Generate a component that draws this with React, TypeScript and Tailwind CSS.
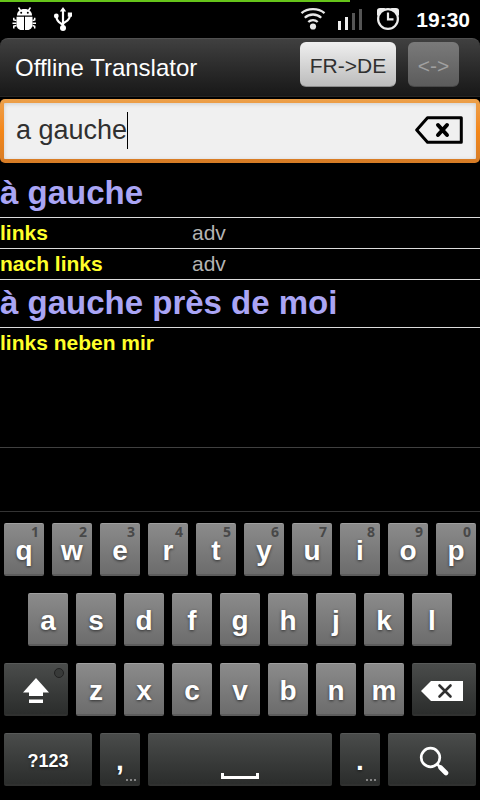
import { Fragment, useState, type ReactNode } from "react";
import clsx from "clsx";

type Entry = { head: string; rows: { text: string; kind?: string }[] };

const entries: Entry[] = [
  {
    head: "à gauche",
    rows: [
      { text: "links", kind: "adv" },
      { text: "nach links", kind: "adv" },
    ],
  },
  { head: "à gauche près de moi", rows: [{ text: "links neben mir" }] },
];

const TOP = "qwertyuiop".split("");
const MIDDLE = "asdfghjkl".split("");
const BOTTOM = "zxcvbnm".split("");

function StatusBar() {
  return (
    <div className="bg-black">
      <div className="h-[2px] w-[73%] bg-[#66c41a]" />
      <div className="flex h-9 items-center pr-[10px] pb-[2px] pl-3 text-white">
        <svg width="24" height="24" viewBox="0 0 24 24" fill="currentColor" aria-hidden>
          <path d="M5 8.500C5 4.500 8 2 12.500 2S20 4.500 20 8.500z" />
          <path d="M8.500 3.500 6.500.5M16.500 3.500l2-3" stroke="currentColor" strokeWidth="1.500" />
          <path d="M4.500 9.800H12V23H9.500c-3 0-5-2.500-5-5.500zM13 9.800h7.500v7.700c0 3-2 5.500-5 5.500H13z" />
          <path
            d="M4.500 13.500 1.800 13v-2.200M4.500 16.200H.5M4.500 18.500l-2.700.7v2.300M20.500 13.500l2.200-.5v-2.200M20.500 16.200H24M20.500 18.500l2.200.7v2.300"
            stroke="currentColor"
            strokeWidth="1.500"
            fill="none"
          />
          <circle cx="9.200" cy="5.800" r="1" fill="#000" />
          <circle cx="15.800" cy="5.800" r="1" fill="#000" />
        </svg>
        <svg width="20" height="24" viewBox="0 0 20 24" fill="none" stroke="currentColor" strokeWidth="2.200" className="ml-[17px]" aria-hidden>
          <path d="M10 3v19M10 18.500c-1-2.500-6.500-2.500-6.500-9M10 17c1-2.500 7-2.500 7-9" />
          <path d="m10 0 3.200 4.500H6.800z" fill="currentColor" stroke="none" />
          <circle cx="10" cy="21" r="3" fill="currentColor" stroke="none" />
          <circle cx="3.300" cy="9" r="2.400" fill="currentColor" stroke="none" />
          <path d="M14.800 5.500H19v4.200h-4.200z" fill="currentColor" stroke="none" />
        </svg>
        <div className="ml-auto flex items-center">
          <svg width="26" height="24" viewBox="0 0 26 24" fill="none" stroke="#e8e8e8" strokeWidth="2.300" aria-hidden>
            <path d="M1.500 6.200C7.500.8 18.500.8 24.500 6.200M4.800 10.800c4.500-4.400 11.900-4.400 16.400 0M8.300 15c2.600-2.500 6.800-2.500 9.400 0" />
            <circle cx="13" cy="19.500" r="3.100" fill="#e8e8e8" stroke="none" />
          </svg>
          <svg width="26" height="24" viewBox="0 0 26 24" className="ml-[11px]" aria-hidden>
            <path d="M1 14h3v9H1zM8 10h3v13H8z" fill="#eee" />
            <path d="M15 6h3v17h-3zM22 2h3v21h-3z" fill="#555" />
          </svg>
          <svg width="24" height="24" viewBox="0 0 24 24" fill="none" stroke="#eee" className="ml-[13px]" aria-hidden>
            <path d="M1 9V3.500Q1 1 4 1h5.500zM23 9V3.500Q23 1 20 1h-5.500z" fill="#eee" stroke="none" />
            <circle cx="12" cy="12" r="9.900" fill="#000" strokeWidth="2.200" />
            <path d="M12 5.500v6.900h5.500" strokeWidth="2.200" />
          </svg>
          <span className="ml-4 pt-[2px] text-[21px] leading-6 font-bold">19:30</span>
        </div>
      </div>
    </div>
  );
}

function Key({
  children,
  className,
  label,
  dark,
  onClick,
}: {
  children: ReactNode;
  className?: string;
  label?: string;
  dark?: boolean;
  onClick?: () => void;
}) {
  return (
    <button
      type="button"
      aria-label={label}
      onClick={onClick}
      className={clsx(
        "relative mx-1 flex h-[53px] items-center justify-center rounded-[2px] border-t border-b-2 pt-1 text-[28px] leading-6 font-bold text-white [text-shadow:0_1px_3px_rgba(0,0,0,0.6)]",
        dark
          ? "border-t-[#585a59] border-b-[#303130] bg-linear-to-b from-[#4a4c4b] to-[#2b2d2c]"
          : "border-t-[#a0a0a0] border-b-[#5c5c5c] bg-linear-to-b from-[#8b8b8b] to-[#6c6c6c]",
        className
      )}
    >
      {children}
    </button>
  );
}

function MoreDots() {
  return (
    <span className="absolute right-1 bottom-[3px] flex gap-[2px]" aria-hidden>
      <i className="size-[2px] bg-[#858585]" />
      <i className="size-[2px] bg-[#858585]" />
      <i className="size-[2px] bg-[#858585]" />
    </span>
  );
}

export default function App() {
  const [query, setQuery] = useState("a gauche");
  const type = (s: string) => setQuery((q) => q + s);
  const erase = () => setQuery((q) => q.slice(0, -1));

  return (
    <div className="flex min-h-screen flex-col bg-black font-['Liberation_Sans',Arial,sans-serif]">
      <StatusBar />

      <header className="flex h-[59px] items-start rounded-t-lg border-t border-b border-t-[#505050] border-b-[#262626] bg-linear-to-b from-[#404040] to-[#181818] pt-[3px] pr-[21px] pl-[15px]">
        <h1 className="flex-1 pt-3 text-[24px] leading-7 text-white">Offline Translator</h1>
        <button
          type="button"
          className="h-[45px] w-24 rounded-md border-b border-[#8a8a8a] bg-linear-to-b from-[#f0f0f0] to-[#bcbcbc] pt-1 text-[21px] leading-6 text-[#303030]"
        >
          FR-&gt;DE
        </button>
        <button
          type="button"
          disabled
          className="ml-3 h-[45px] w-[51px] rounded-md border-b border-[#484848] bg-linear-to-b from-[#7a7a7a] to-[#5c5c5c] pt-1 text-[21px] leading-6 text-[#a0a0a0]"
        >
          &lt;-&gt;
        </button>
      </header>

      <div className="mt-[2px] rounded-[5px] bg-linear-to-b from-[#eba04a] via-[#f48718] to-[#d67c26] p-1">
        <label className="flex h-14 items-center rounded-[1px] bg-[#f0f0f0] pr-[13px] pb-[2px] pl-3 shadow-[inset_0_1px_4px_rgba(0,0,0,0.15)]">
          <input
            type="text"
            aria-label="Search word"
            value={query}
            onChange={(e) => setQuery(e.target.value)}
            className="field-sizing-content max-w-[80%] text-[27px] leading-9 text-[#303030] caret-transparent outline-none"
          />
          <span className="h-[37px] w-px bg-black" />
          <button type="button" aria-label="Clear" onClick={() => setQuery("")} className="ml-auto">
            <svg width="48" height="28" viewBox="0 0 48 28" fill="none" stroke="#000" strokeWidth="3" strokeLinejoin="round" className="block">
              <path d="M1.700 14 12.500 1.700h33.800v24.600H12.500z" />
              <path d="m23 9 9 10M32 9l-9 10" strokeWidth="4" strokeLinecap="round" />
            </svg>
          </button>
        </label>
      </div>

      <main className="mt-[7px] flex-1">
        <table className="w-full table-fixed border-separate border-spacing-0 text-left">
          <colgroup>
            <col className="w-[40%]" />
            <col />
          </colgroup>
          <tbody>
            {entries.map((entry, n) => {
              const line = n < entries.length - 1 ? "border-[#dcdcdc]" : "border-transparent";
              return (
                <Fragment key={entry.head}>
                  <tr>
                    <th
                      colSpan={2}
                      className="h-12 border-b border-[#dcdcdc] p-0 pb-[2px] text-[33px] leading-9 font-bold text-[#aaa5f5]"
                    >
                      {entry.head}
                    </th>
                  </tr>
                  {entry.rows.map((row) => (
                    <tr key={row.text}>
                      <td className={clsx("h-[31px] border-b p-0 text-[21px] leading-6 font-bold text-[#ffff2a]", line)}>
                        {row.text}
                      </td>
                      <td className={clsx("border-b p-0 text-[21px] leading-6 text-[#b4b4b4]", line)}>
                        {row.kind}
                      </td>
                    </tr>
                  ))}
                </Fragment>
              );
            })}
          </tbody>
        </table>
      </main>

      {/* Empty suggestion strip above the keys */}
      <div className="h-16 border-t border-[#404040]" />

      <div className="border-t border-[#333] pt-[11px] pb-[14px]">
        <div className="grid grid-cols-20 gap-y-[17px]">
          {TOP.map((c, i) => (
            <Key key={c} className="col-span-2" onClick={() => type(c)}>
              {c}
              <span className="absolute top-0 right-[5px] font-['Open_Sans','Noto_Sans',sans-serif] text-[14px] leading-4 text-[#484848] [text-shadow:none]">
                {(i + 1) % 10}
              </span>
            </Key>
          ))}

          {MIDDLE.map((c, i) => (
            <Key key={c} className={clsx("col-span-2", i === 0 && "col-start-2")} onClick={() => type(c)}>
              {c}
            </Key>
          ))}

          <Key dark label="Shift" className="col-span-3 col-start-1">
            <svg width="26" height="26" viewBox="0 0 26 26" fill="#fff" aria-hidden>
              <path d="m13 0 13 14.500h-6V18H6v-3.500H0zM6 21.500h14V25H6z" />
            </svg>
            <span className="absolute top-1 right-1 size-[10px] rounded-full border border-[#222] bg-[#383a39]" />
          </Key>
          {BOTTOM.map((c) => (
            <Key key={c} className="col-span-2" onClick={() => type(c)}>
              {c}
            </Key>
          ))}
          <Key dark label="Backspace" className="col-span-3" onClick={erase}>
            <svg width="42" height="20" viewBox="0 0 42 20" className="mr-1" aria-hidden>
              <path d="M0 10 10 0h32v20H10z" fill="#fff" />
              <path d="m18.500 4.500 11 11M29.500 4.500l-11 11" stroke="#303030" strokeWidth="2.600" strokeLinecap="round" />
            </svg>
          </Key>

          <Key dark className="col-span-4">
            <span className="text-[18px] leading-6">?123</span>
          </Key>
          <Key dark className="col-span-2" onClick={() => type(",")}>
            ,
            <MoreDots />
          </Key>
          <Key dark label="Space" className="col-span-8" onClick={() => type(" ")}>
            <span className="mt-[30px] h-[6px] w-[38px] border-x-3 border-b-3 border-white" />
          </Key>
          <Key dark className="col-span-2" onClick={() => type(".")}>
            .
            <MoreDots />
          </Key>
          <Key dark label="Search" className="col-span-4">
            <svg width="30" height="30" viewBox="0 0 30 30" fill="none" stroke="#fff" strokeLinecap="round" className="ml-[3px]" aria-hidden>
              <circle cx="11.500" cy="11.500" r="9.300" strokeWidth="2.700" />
              <path d="m18.500 18.500 3 3" strokeWidth="2.500" />
              <path d="m21.500 21.500 5.500 5.500" strokeWidth="4.600" />
            </svg>
          </Key>
        </div>
      </div>
    </div>
  );
}
